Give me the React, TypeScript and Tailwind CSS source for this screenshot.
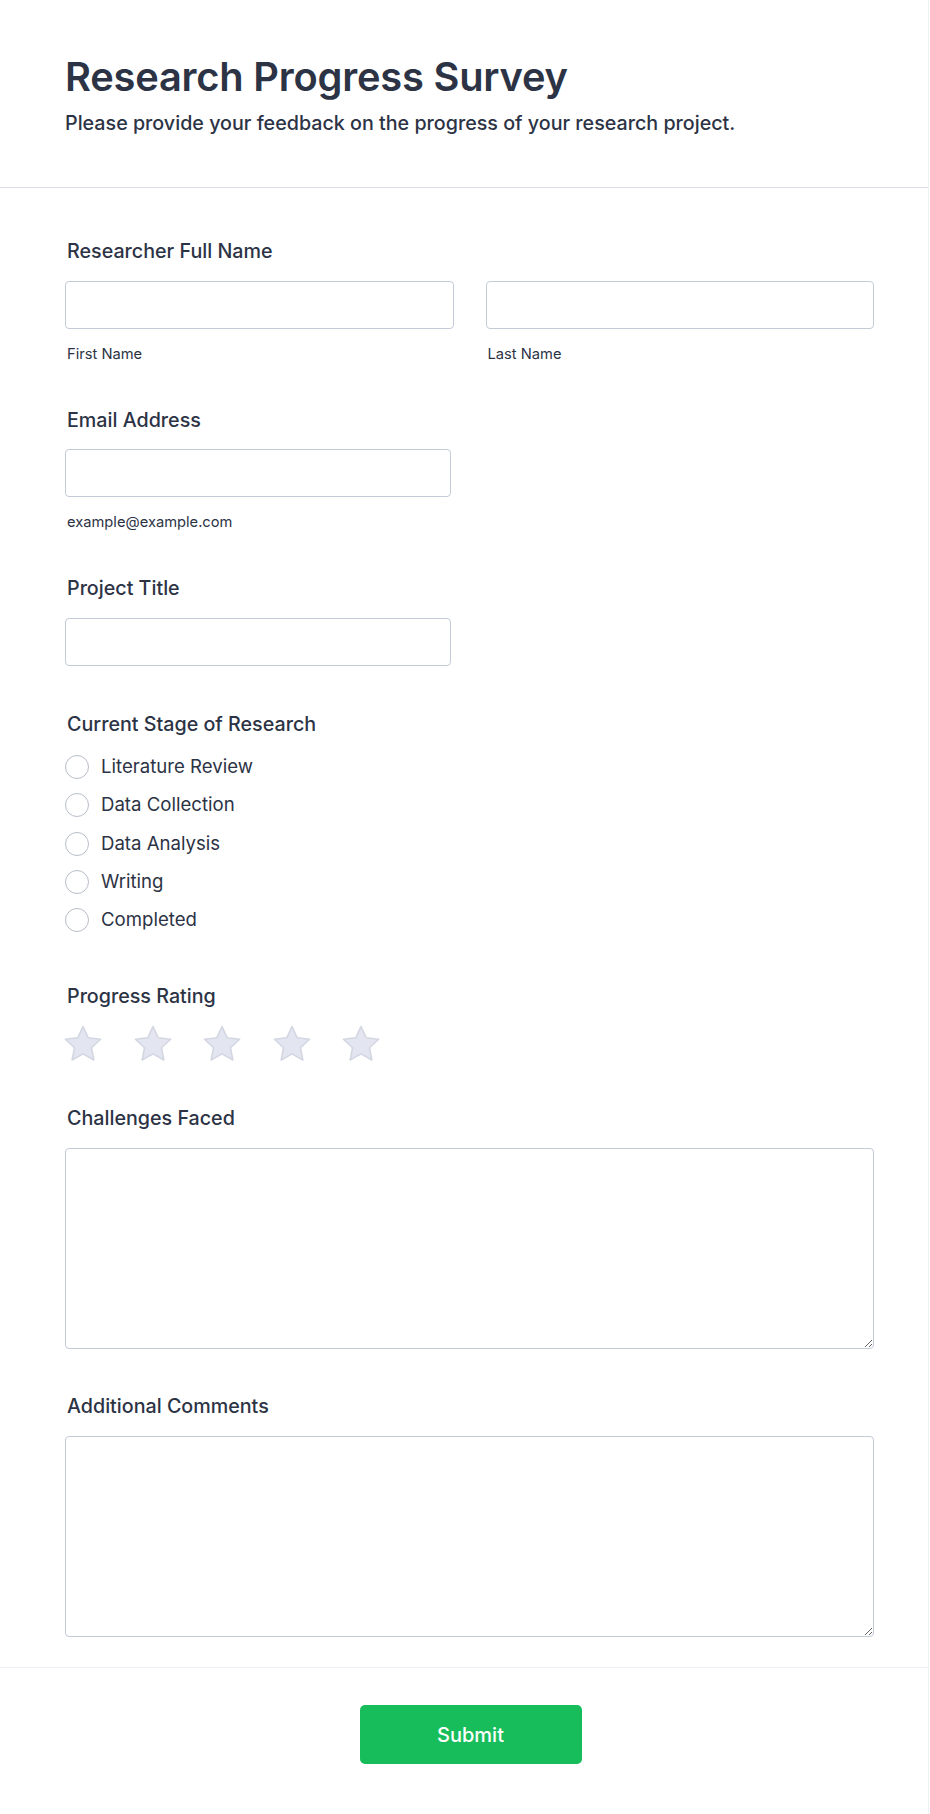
import React from 'react'

const font = { fontFamily: 'Inter, "Noto Sans", sans-serif' }

function Label({ children }: { children: React.ReactNode }) {
  return <div className="text-[19.7px] font-medium text-[#2c3345] leading-[24px] pl-[2px]">{children}</div>
}

function Sub({ children }: { children: React.ReactNode }) {
  return <div className="text-[14.7px] text-[#2c3345] mt-[15px] pl-[2px] leading-[20px]">{children}</div>
}

function Input({ className = '' }: { className?: string }) {
  return (
    <input
      type="text"
      className={`block h-[48px] rounded-[4px] border border-[#c3cad8] bg-white px-3 outline-none ${className}`}
    />
  )
}

function Star() {
  return (
    <svg width="40" height="37" viewBox="0 0 40 37">
      <path
        d="M20 1.5L25.22 12.82L37.59 14.28L28.45 22.74L30.87 34.97L20 28.88L9.13 34.97L11.55 22.74L2.41 14.28L14.78 12.82Z"
        fill="#e3e6f0"
        stroke="#d3d7e2"
        strokeWidth="1.6"
        strokeLinejoin="round"
      />
    </svg>
  )
}

const stages = ['Literature Review', 'Data Collection', 'Data Analysis', 'Writing', 'Completed']

export default function App() {
  return (
    <div className="w-[929px] min-h-[1814px] bg-white border-r border-[#eef0f5]" style={font}>
      {/* Header */}
      <div className="px-[65px] pt-[53px] pb-[52px] border-b border-[#dcdee8]">
        <h1 className="text-[39.8px] font-semibold text-[#2c3345] leading-[48px] tracking-[-0.2px]">
          Research Progress Survey
        </h1>
        <p className="text-[19.7px] font-medium text-[#2c3345] leading-[24px] mt-[10px]">
          Please provide your feedback on the progress of your research project.
        </p>
      </div>

      {/* Fields */}
      <div className="px-[65px] pt-[51px] pb-[30px] border-b border-[#eceef4]">
        <Label>Researcher Full Name</Label>
        <div className="grid grid-cols-2 gap-[32px] w-[809px] mt-[18px]">
          <div>
            <Input className="w-full" />
            <Sub>First Name</Sub>
          </div>
          <div>
            <Input className="w-full" />
            <Sub>Last Name</Sub>
          </div>
        </div>

        <div className="mt-[44px]">
          <Label>Email Address</Label>
          <Input className="w-[386px] mt-[17px]" />
          <Sub>example@example.com</Sub>
        </div>

        <div className="mt-[44px]">
          <Label>Project Title</Label>
          <Input className="w-[386px] mt-[18px]" />
        </div>

        <div className="mt-[46px]">
          <Label>Current Stage of Research</Label>
          <div className="mt-[19px] flex flex-col gap-[14.3px]">
            {stages.map((s) => (
              <label key={s} className="flex items-center gap-[12px] h-[24px]">
                <span className="w-[24px] h-[24px] rounded-full border border-[#b8bdc9] bg-white" />
                <span className="text-[18.6px] text-[#2c3345]">{s}</span>
              </label>
            ))}
          </div>
        </div>

        <div className="mt-[52px]">
          <Label>Progress Rating</Label>
          <div className="mt-[17px] flex gap-[29.5px] -ml-[2px]">
            {[0, 1, 2, 3, 4].map((i) => (
              <Star key={i} />
            ))}
          </div>
        </div>

        <div className="mt-[44px]">
          <Label>Challenges Faced</Label>
          <textarea className="block w-[809px] h-[201px] mt-[18px] rounded-[4px] border border-[#c3cad8] bg-white outline-none" />
        </div>

        <div className="mt-[45px]">
          <Label>Additional Comments</Label>
          <textarea className="block w-[809px] h-[201px] mt-[18px] rounded-[4px] border border-[#c3cad8] bg-white outline-none" />
        </div>
      </div>

      {/* Footer */}
      <div className="flex justify-center pt-[37px] pb-[50px]">
        <button className="ml-[13px] w-[222px] h-[59px] rounded-[5px] bg-[#18bd5b] text-white text-[20px] font-medium">
          Submit
        </button>
      </div>
    </div>
  )
}
